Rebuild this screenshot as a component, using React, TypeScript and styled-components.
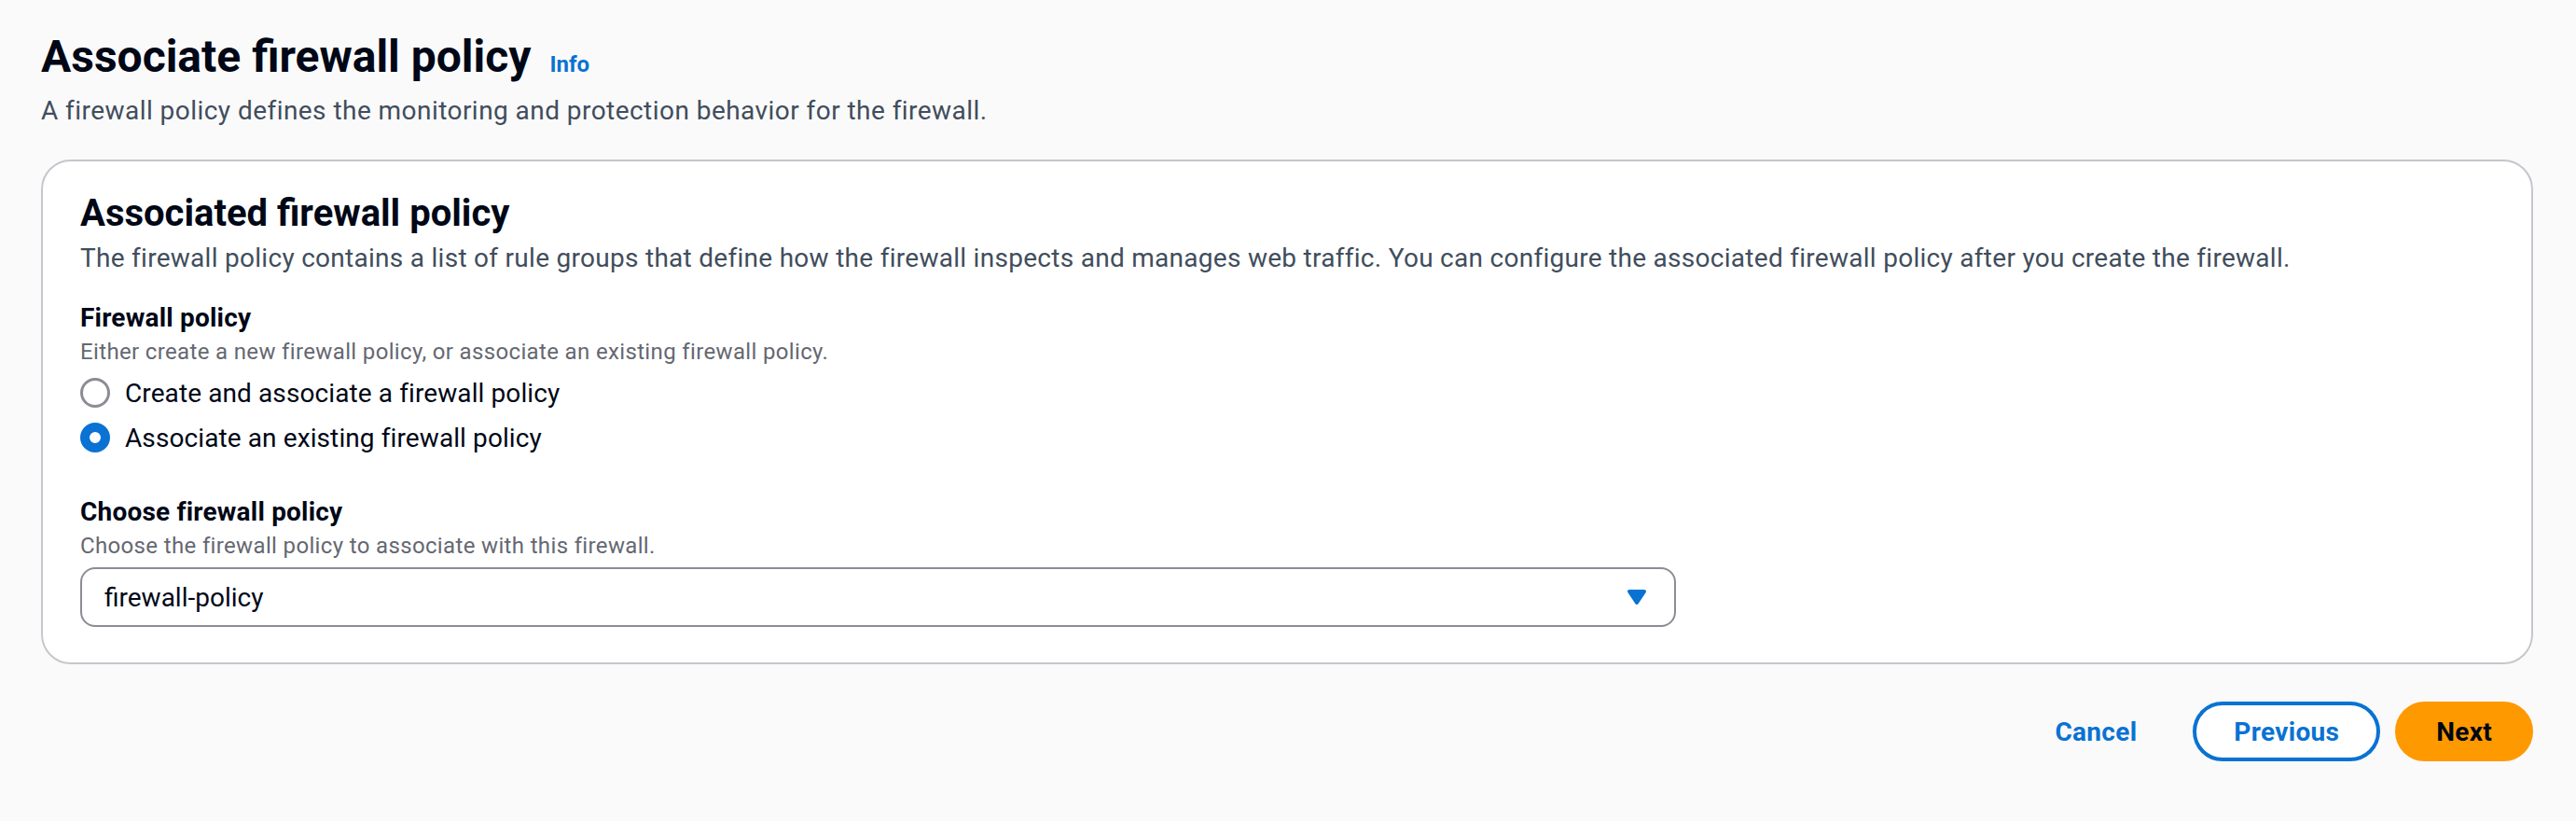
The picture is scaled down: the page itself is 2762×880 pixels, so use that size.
import React from "react";
import styled, { createGlobalStyle, css } from "styled-components";

const GlobalStyle = createGlobalStyle`
  body {
    margin: 0;
    background: #fafafa;
    font-family: Roboto, "Noto Sans", sans-serif;
    color: #000716;
  }
`;

const Page = styled.div`
  padding: 31px 46px 40px 44px;
`;

const TitleRow = styled.div`
  display: flex;
  align-items: baseline;
  gap: 20px;
`;

const Title = styled.h1`
  margin: 0;
  font-size: 48px;
  line-height: 60px;
  font-weight: 700;
  color: #000716;
`;

const InfoLink = styled.a`
  font-size: 24px;
  font-weight: 700;
  color: #0972d3;
  text-decoration: none;
`;

const Subtitle = styled.p`
  margin: 8px 0 0;
  font-size: 28px;
  line-height: 40px;
  letter-spacing: 0.45px;
  color: #414d5c;
`;

const Card = styled.section`
  margin-top: 32px;
  background: #ffffff;
  border: 2px solid #c6c6cd;
  border-radius: 32px;
  padding: 32px 40px 38px;
`;

const CardTitle = styled.h2`
  margin: 0;
  font-size: 40px;
  line-height: 48px;
  font-weight: 700;
`;

const CardDescription = styled.p`
  margin: 4px 0 0;
  font-size: 28px;
  line-height: 40px;
  letter-spacing: 0.28px;
  color: #414d5c;
`;

const Field = styled.div<{ $gap: number }>`
  margin-top: ${(p) => p.$gap}px;
`;

const Label = styled.div`
  font-size: 28px;
  line-height: 40px;
  font-weight: 700;
  letter-spacing: 0.2px;
`;

const Hint = styled.div`
  font-size: 24px;
  line-height: 32px;
  letter-spacing: 0.35px;
  color: #656871;
`;

const RadioGroup = styled.div`
  margin-top: 8px;
  display: flex;
  flex-direction: column;
  gap: 8px;
`;

const RadioRow = styled.label`
  display: flex;
  align-items: center;
  gap: 16px;
  height: 40px;
  font-size: 28px;
  letter-spacing: 0.1px;
`;

const RadioDot = styled.span<{ $checked?: boolean }>`
  box-sizing: border-box;
  width: 32px;
  height: 32px;
  border-radius: 50%;
  background: #ffffff;
  ${(p) =>
    p.$checked
      ? css`
          border: 10px solid #0972d3;
        `
      : css`
          border: 3px solid #8c8c94;
        `}
`;

const Select = styled.div`
  box-sizing: border-box;
  margin-top: 7px;
  width: 1711px;
  height: 64px;
  padding: 0 24px;
  display: flex;
  align-items: center;
  justify-content: space-between;
  background: #ffffff;
  border: 2px solid #8c8c94;
  border-radius: 16px;
  font-size: 28px;
`;

const Footer = styled.div`
  margin-top: 40px;
  display: flex;
  justify-content: flex-end;
  gap: 16px;
`;

const Button = styled.button<{ $variant: "link" | "normal" | "primary" }>`
  box-sizing: border-box;
  height: 64px;
  padding: 0 40px;
  border-radius: 40px;
  border: 4px solid transparent;
  font-family: inherit;
  font-size: 28px;
  font-weight: 700;
  letter-spacing: 0.3px;
  cursor: pointer;
  ${(p) =>
    p.$variant === "link" &&
    css`
      background: transparent;
      color: #0972d3;
    `}
  ${(p) =>
    p.$variant === "normal" &&
    css`
      background: #ffffff;
      border-color: #0972d3;
      color: #0972d3;
    `}
  ${(p) =>
    p.$variant === "primary" &&
    css`
      background: #ff9900;
      border-color: #ff9900;
      color: #000716;
    `}
`;

function CaretDown() {
  return (
    <svg width="32" height="32" viewBox="0 0 16 16">
      <path d="M4 5h8l-4 6-4-6z" fill="#0972d3" stroke="#0972d3" strokeWidth="2" strokeLinejoin="round" />
    </svg>
  );
}

export default function App() {
  return (
    <Page>
      <GlobalStyle />
      <TitleRow>
        <Title>Associate firewall policy</Title>
        <InfoLink href="#">Info</InfoLink>
      </TitleRow>
      <Subtitle>A firewall policy defines the monitoring and protection behavior for the firewall.</Subtitle>

      <Card>
        <CardTitle>Associated firewall policy</CardTitle>
        <CardDescription>
          The firewall policy contains a list of rule groups that define how the firewall inspects and manages web
          traffic. You can configure the associated firewall policy after you create the firewall.
        </CardDescription>

        <Field $gap={24}>
          <Label>Firewall policy</Label>
          <Hint>Either create a new firewall policy, or associate an existing firewall policy.</Hint>
          <RadioGroup>
            <RadioRow>
              <RadioDot />
              Create and associate a firewall policy
            </RadioRow>
            <RadioRow>
              <RadioDot $checked />
              Associate an existing firewall policy
            </RadioRow>
          </RadioGroup>
        </Field>

        <Field $gap={40}>
          <Label>Choose firewall policy</Label>
          <Hint>Choose the firewall policy to associate with this firewall.</Hint>
          <Select>
            <span>firewall-policy</span>
            <CaretDown />
          </Select>
        </Field>
      </Card>

      <Footer>
        <Button $variant="link">Cancel</Button>
        <Button $variant="normal">Previous</Button>
        <Button $variant="primary">Next</Button>
      </Footer>
    </Page>
  );
}
